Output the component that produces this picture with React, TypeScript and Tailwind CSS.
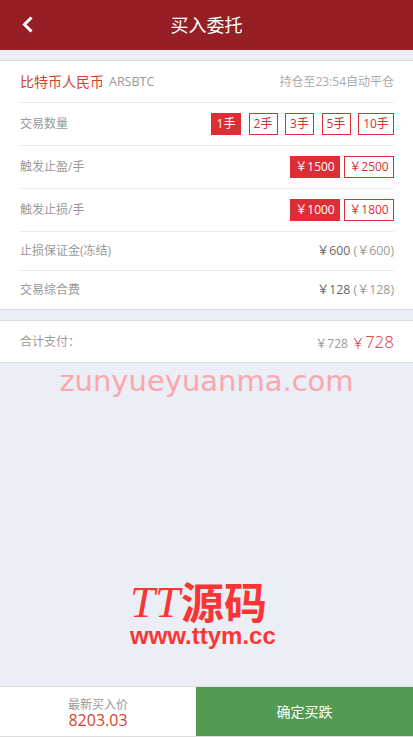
import React from 'react';

const FONT = "font-['Open_Sans','Noto_Sans_CJK_SC',sans-serif]";

const Row = ({ label, children }: { label: string; children: React.ReactNode }) => (
  <div className="flex h-[43px] items-center justify-between border-b border-[#ececec]">
    <span className="-mt-[1px] text-[12px] text-[#999]">{label}</span>
    {children}
  </div>
);

const Chip = ({ text, active, className }: { text: string; active?: boolean; className?: string }) => (
  <span
    className={`flex h-[22px] items-center justify-center border border-[#dd2e36] text-[12px] ${
      active ? 'bg-[#dd2e36] text-white' : 'bg-white text-[#dd2e36]'
    } ${className ?? ''}`}
  >
    {text}
  </span>
);

export default function App() {
  return (
    <div className={`${FONT} relative flex h-[737px] w-[413px] flex-col overflow-hidden bg-[#ebeef4]`}>
      {/* Header */}
      <div className="relative flex h-[50px] items-center justify-center bg-[#951f24]">
        <svg className="absolute left-[21px] top-[16px]" width="13" height="17" viewBox="0 0 13 17" fill="none">
          <path d="M10.5 1.5 L3.5 8.5 L10.5 15.5" stroke="white" strokeWidth="3" />
        </svg>
        <span className="text-[18px] text-white">买入委托</span>
      </div>

      {/* Order details */}
      <div className="mt-[10px] border-y border-[#dcdcdc] bg-white pl-[20px] pr-[19px]">
        <div className="flex h-[42px] items-center justify-between border-b border-[#ececec]">
          <div className="flex items-center gap-[5px]">
            <span className="text-[14px] text-[#d2452c]">比特币人民币</span>
            <span className="mt-[2px] text-[12.5px] text-[#999]">ARSBTC</span>
          </div>
          <span className="text-[12px] text-[#aaa]">持仓至23:54自动平仓</span>
        </div>
        <Row label="交易数量">
          <div className="flex gap-[7.5px]">
            <Chip text="1手" active className="w-[30px]" />
            <Chip text="2手" className="w-[29px]" />
            <Chip text="3手" className="w-[29px]" />
            <Chip text="5手" className="w-[29px]" />
            <Chip text="10手" className="w-[36px]" />
          </div>
        </Row>
        <Row label="触发止盈/手">
          <div className="flex gap-[4px]">
            <Chip text="￥1500" active className="w-[50px]" />
            <Chip text="￥2500" className="w-[50px]" />
          </div>
        </Row>
        <Row label="触发止损/手">
          <div className="flex gap-[4px]">
            <Chip text="￥1000" active className="w-[50px]" />
            <Chip text="￥1800" className="w-[50px]" />
          </div>
        </Row>
        <div className="flex h-[39px] items-center justify-between border-b border-[#ececec]">
          <span className="text-[12px] text-[#999]">止损保证金(冻结)</span>
          <span className="text-[12.25px] text-[#666]">
            ￥600 <span className="text-[#999]">(￥600)</span>
          </span>
        </div>
        <div className="flex h-[38px] items-center justify-between">
          <span className="text-[12px] text-[#999]">交易综合费</span>
          <span className="text-[12.25px] text-[#666]">
            ￥128 <span className="text-[#999]">(￥128)</span>
          </span>
        </div>
      </div>

      {/* Total */}
      <div className="mt-[10px] flex h-[43px] items-center justify-between border-y border-[#dcdcdc] bg-white pl-[20px] pr-[19px]">
        <span className="text-[12px] text-[#999]">合计支付：</span>
        <div className="flex items-baseline gap-[3px]">
          <span className="text-[12px] text-[#999]">￥728</span>
          <span className="text-[17px] font-light text-[#e02a33]">
            <span className="text-[14px]">￥</span>728
          </span>
        </div>
      </div>

      {/* Watermarks */}
      <div className="absolute left-0 top-[363px] w-full text-center font-['DejaVu_Sans',sans-serif] text-[29px] leading-[36px] text-[#fba7ad]">
        zunyueyuanma.com
      </div>
      <div className="absolute left-[130px] top-[582px] text-[#f93636]">
        <div className="flex h-[41px] items-center gap-[1px]">
          <span className="font-['Liberation_Serif',serif] text-[45px] italic leading-none">TT</span>
          <span className="text-[43px] font-bold leading-none">源码</span>
        </div>
        <div className="font-['Liberation_Sans',sans-serif] text-[24px] font-bold leading-[26px]">www.ttym.cc</div>
      </div>

      {/* Footer */}
      <div className="mt-auto flex h-[51px] border-y border-[#dcdcdc] bg-white">
        <div className="flex w-[196px] flex-col items-center justify-center pt-[2px]">
          <span className="h-[14px] text-[12px] leading-[14px] text-[#999]">最新买入价</span>
          <span className="h-[16px] text-[16px] leading-[16px] text-[#d2452c]">8203.03</span>
        </div>
        <div className="flex flex-1 items-center justify-center bg-[#539b53] text-[14px] text-white">确定买跌</div>
      </div>
    </div>
  );
}
